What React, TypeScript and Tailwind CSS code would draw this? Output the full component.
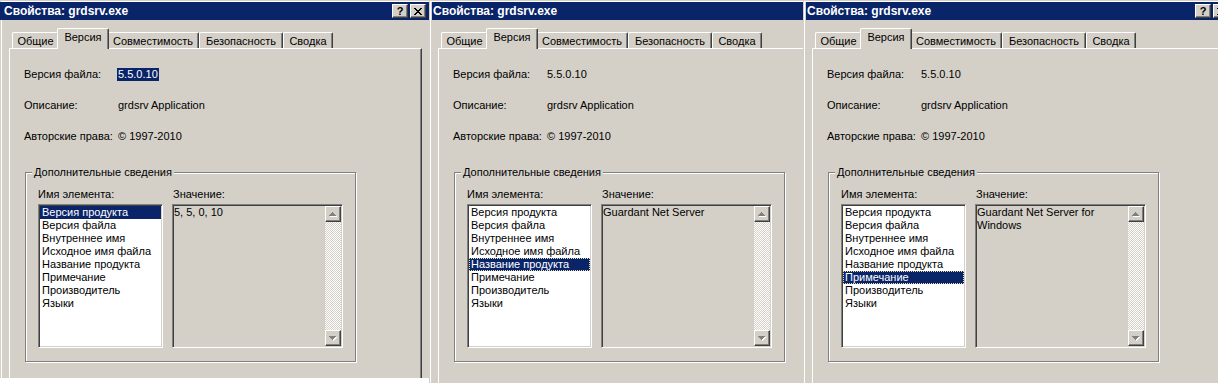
import clsx from "clsx";

const fields = [
  "Версия продукта",
  "Версия файла",
  "Внутреннее имя",
  "Исходное имя файла",
  "Название продукта",
  "Примечание",
  "Производитель",
  "Языки",
];

const tabs = [
  { name: "Общие", w: "w-[47px]" },
  { name: "Версия", w: "w-[52px]" },
  { name: "Совместимость", w: "w-[92px]" },
  { name: "Безопасность", w: "w-[84px]" },
  { name: "Сводка", w: "w-[50px]" },
];

const panels = [
  { clip: "w-[429px] h-[378px]", first: true, buttons: true, selected: 0, focused: false, value: "5, 5, 0, 10", highlight: true },
  { clip: "w-[374px] h-[383px]", first: false, buttons: false, selected: 4, focused: true, value: "Guardant Net Server", highlight: false },
  { clip: "w-[415px] h-[383px]", first: false, buttons: true, selected: 5, focused: true, value: "Guardant Net Server for Windows", highlight: false },
];

const raised =
  "border border-t-white border-l-white border-b-[#404040] border-r-[#404040] bg-[#d4d0c8] shadow-[inset_-1px_-1px_0_#808080]";
const sunken =
  "border border-t-[#808080] border-l-[#808080] border-b-white border-r-white shadow-[inset_1px_1px_0_#404040,inset_-1px_-1px_0_#d4d0c8]";

function CloseGlyph() {
  const rows = [
    [0, 1, 6, 7],
    [1, 2, 5, 6],
    [2, 3, 4, 5],
    [3, 4],
    [2, 3, 4, 5],
    [1, 2, 5, 6],
    [0, 1, 6, 7],
  ];
  return (
    <svg width="8" height="7" viewBox="0 0 8 7" shapeRendering="crispEdges">
      {rows.map((r, y) => r.map((x) => <rect key={`${x}-${y}`} x={x} y={y} width="1" height="1" fill="#000" />))}
    </svg>
  );
}

function Arrow({ up }: { up: boolean }) {
  const rows = [0, 1, 2, 3];
  return (
    <svg width="8" height="5" viewBox="0 0 8 5" shapeRendering="crispEdges">
      {rows.map((i) => {
        const y = up ? i : 3 - i;
        return <rect key={`s${i}`} x={4 - i} y={y + 1} width={1 + 2 * i} height="1" fill="#fff" />;
      })}
      {rows.map((i) => {
        const y = up ? i : 3 - i;
        return <rect key={`a${i}`} x={3 - i} y={y} width={1 + 2 * i} height="1" fill="#808080" />;
      })}
    </svg>
  );
}

function Dialog({ clip, first, buttons, selected, focused, value, highlight }: (typeof panels)[number]) {
  return (
    <div className={clsx("shrink-0 overflow-hidden", clip)}>
      <div className="flex h-[383px] w-[432px] flex-col bg-[#d4d0c8] pt-[1px]">
        <div className="ml-[1px] flex flex-1 flex-col border-l border-t border-white pl-[1px] pr-[3px]">
          {/* caption */}
          <div
            className={clsx(
              "flex h-[18px] items-center justify-between bg-[#0a246a] pr-[3px]",
              first ? "-ml-[3px] pl-[4px]" : "pl-[1px]"
            )}
          >
            <span className="text-[12px] font-bold leading-[13px] text-white">Свойства: grdsrv.exe</span>
            {buttons && (
              <div className="flex gap-[2px]">
                <div className={clsx("flex h-[14px] w-[16px] items-center justify-center", raised)}>
                  <span className="text-[11px] font-bold leading-[11px] text-black">?</span>
                </div>
                <div className={clsx("flex h-[14px] w-[16px] items-center justify-center", raised)}>
                  <CloseGlyph />
                </div>
              </div>
            )}
          </div>

          <div className="ml-[6px] mr-[7px] mt-[8px] flex flex-1 flex-col">
            {/* tabs */}
            <div className="flex h-[20px] items-end pl-[3px]">
              {tabs.map((t, i) =>
                i === 1 ? (
                  <div
                    key={t.name}
                    className={clsx(
                      "relative z-10 -mx-[2px] -mb-[1px] h-[21px] rounded-t-[2px] border-l border-r border-t border-white border-r-[#404040] bg-[#d4d0c8] pt-[2px] text-center shadow-[inset_-1px_0_0_#808080]",
                      t.w
                    )}
                  >
                    {t.name}
                  </div>
                ) : (
                  <div
                    key={t.name}
                    className={clsx(
                      "h-[16px] rounded-t-[2px] border-l border-r border-t border-white border-r-[#404040] pt-[2px] text-center shadow-[inset_-1px_0_0_#808080]",
                      t.w
                    )}
                  >
                    {t.name}
                  </div>
                )
              )}
            </div>

            {/* tab page */}
            <div className="flex-1 border-l border-r border-t border-white border-r-[#404040] pl-[14px] pt-[19px] shadow-[inset_-1px_0_0_#808080]">
              <div className="flex flex-col gap-[18px]">
                <div className="flex h-[13px]">
                  <span className="w-[93px]">Версия файла:</span>
                  <span className={clsx("px-[1px]", highlight && "bg-[#0a246a] text-white")}>5.5.0.10</span>
                </div>
                <div className="flex h-[13px]">
                  <span className="w-[93px]">Описание:</span>
                  <span className="pl-[1px]">grdsrv Application</span>
                </div>
                <div className="flex h-[13px]">
                  <span className="w-[93px]">Авторские права:</span>
                  <span className="pl-[1px]">© 1997-2010</span>
                </div>
              </div>

              <fieldset className="ml-[1px] mt-[23px] w-[331px] min-w-0 border border-[#808080] p-0 shadow-[inset_1px_1px_0_#fff,1px_1px_0_#fff]">
                <legend className="ml-[6px] bg-[#d4d0c8] px-[2px] leading-[13px]">Дополнительные сведения</legend>
                <div className="flex gap-[9px] px-[12px] pb-[13px] pt-[9px]">
                  <div className="flex w-[125px] flex-col gap-[3px]">
                    <span className="h-[13px]">Имя элемента:</span>
                    <div className={clsx("h-[144px] bg-white p-[1px]", sunken)}>
                      {fields.map((f, i) => (
                        <div
                          key={f}
                          className={clsx(
                            "h-[13px] whitespace-nowrap pl-[2px]",
                            i === selected && "bg-[#0a246a] text-white",
                            i === selected && focused && "outline-1 -outline-offset-1 outline-dotted outline-[#e8dfa0]"
                          )}
                        >
                          {f}
                        </div>
                      ))}
                    </div>
                  </div>
                  <div className="flex w-[171px] flex-col gap-[3px]">
                    <span className="h-[13px] pl-[1px]">Значение:</span>
                    <div className={clsx("flex h-[144px] bg-[#d4d0c8] p-[1px]", sunken)}>
                      <div className="min-w-0 flex-1 pr-[2px]">{value}</div>
                      <div className="flex w-[16px] flex-col">
                        <div className={clsx("flex h-[16px] items-center justify-center", raised)}>
                          <Arrow up />
                        </div>
                        <div className="flex-1 bg-[repeating-conic-gradient(#d4d0c8_0%_25%,#ffffff_0%_50%)] bg-[length:2px_2px]" />
                        <div className={clsx("flex h-[16px] items-center justify-center", raised)}>
                          <Arrow up={false} />
                        </div>
                      </div>
                    </div>
                  </div>
                </div>
              </fieldset>
            </div>
          </div>
        </div>
      </div>
    </div>
  );
}

export default function App() {
  return (
    <div className="flex h-[383px] w-[1218px] items-start overflow-hidden bg-white font-['Liberation_Sans',Arial,sans-serif] text-[11px] leading-[13px] text-black">
      {panels.map((p, i) => (
        <Dialog key={i} {...p} />
      ))}
    </div>
  );
}
